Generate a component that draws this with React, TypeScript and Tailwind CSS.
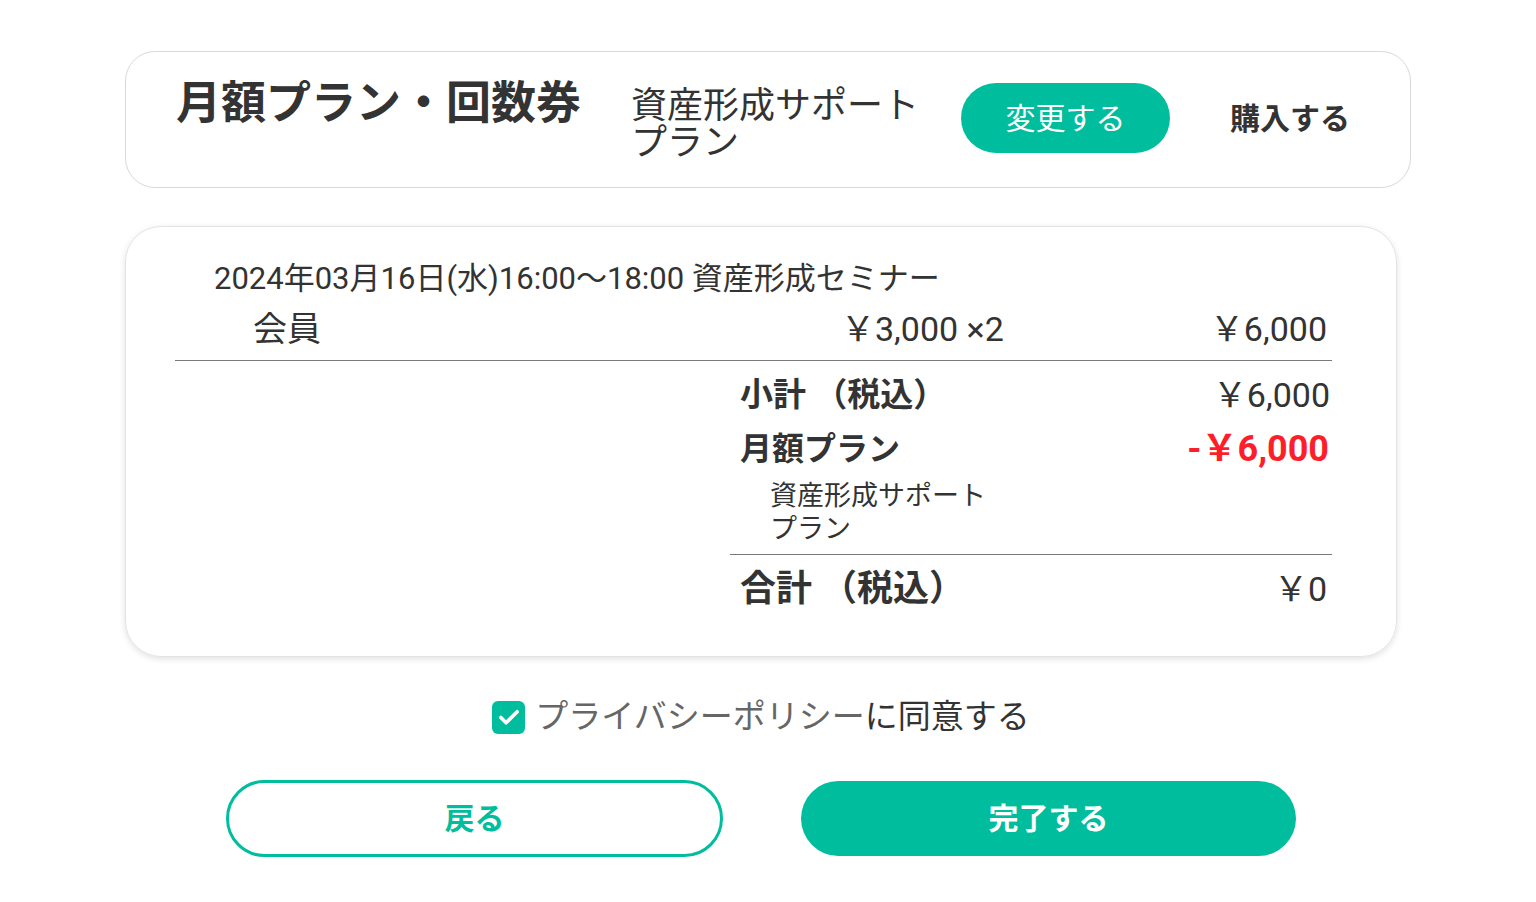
const font = { fontFamily: 'Roboto, "Noto Sans CJK JP", sans-serif' };

function Check() {
  return (
    <svg width="26" height="26" viewBox="0 0 24 24" fill="none" stroke="white" strokeWidth="3.4" strokeLinecap="round" strokeLinejoin="round">
      <path d="M4.5 12.5l4.8 4.8L19.5 7.2" />
    </svg>
  );
}

export default function App() {
  return (
    <div className="min-h-[902px] w-full bg-white text-[#333]" style={font}>
      <div className="pl-[125px] pt-[51px]">
        {/* plan card */}
        <div className="flex h-[137px] w-[1286px] items-start rounded-[30px] border border-[#d9d9d9] pl-[50px]">
          <h1 className="mt-[26px] text-[45px] font-bold leading-[52px] whitespace-nowrap">月額プラン・回数券</h1>
          <div className="ml-[50px] mt-[36px] w-[300px] text-[36px] leading-[37px]">資産形成サポートプラン</div>
          <button className="ml-[30px] mt-[31px] flex h-[70px] w-[209px] items-center justify-center rounded-full bg-[#00bd9d] text-[30px] text-white">
            変更する
          </button>
          <button className="ml-[60px] mt-[31px] flex h-[70px] items-center text-[30px] font-bold">購入する</button>
        </div>

        {/* order card */}
        <div className="mt-[38px] w-[1272px] rounded-[36px] border border-[#e3e3e3] pb-[33px] pl-[49px] pt-[32px] shadow-[0_2px_6px_rgba(0,0,0,0.12)]">
          <div className="w-[1157px]">
            <div className="h-[40px] pl-[39px] text-[31px] leading-[40px] whitespace-nowrap">
              2024年03月16日(水)16:00〜18:00 資産形成セミナー
            </div>
            <div className="flex h-[62px] items-center border-b border-[#7a7a7a] text-[34px]">
              <span className="w-[666px] pl-[78px]">会員</span>
              <span className="flex-1">￥3,000 ×2</span>
              <span className="pr-[5px]">￥6,000</span>
            </div>
            <div className="ml-[555px]">
              <div className="border-b border-[#7a7a7a] pb-[8px]">
                <div className="flex h-[68px] items-center justify-between pl-[10px] pr-[2px]">
                  <span className="text-[33px] font-bold whitespace-pre">小計 （税込）</span>
                  <span className="text-[34px]">￥6,000</span>
                </div>
                <div className="flex h-[40px] items-center justify-between pl-[10px] pr-[3px]">
                  <span className="text-[32px] font-bold">月額プラン</span>
                  <span className="text-[36px] font-bold text-[#fe1e2a]">-￥6,000</span>
                </div>
                <div className="mt-[11px] w-[270px] pl-[40px] text-[27px] leading-[33px]">資産形成サポートプラン</div>
              </div>
              <div className="flex h-[68px] items-center justify-between pl-[10px] pr-[5px]">
                <span className="text-[36px] font-bold whitespace-pre">合計 （税込）</span>
                <span className="text-[34px]">￥0</span>
              </div>
            </div>
          </div>
        </div>

        {/* agreement */}
        <div className="mt-[40px] flex w-[1272px] items-center justify-center">
          <span className="flex h-[33px] w-[33px] items-center justify-center rounded-[6px] bg-[#00bd9d]">
            <Check />
          </span>
          <span className="ml-[10px] text-[33px] leading-[40px]">
            <span className="text-[#666]">プライバシーポリシー</span>に同意する
          </span>
        </div>

        {/* actions */}
        <div className="mt-[43px] flex w-[1272px] items-center justify-center gap-[78px]">
          <button className="flex h-[77px] w-[497px] items-center justify-center rounded-full border-[3px] border-[#00bd9d] text-[30px] font-bold text-[#00bd9d]">
            戻る
          </button>
          <button className="flex h-[75px] w-[495px] items-center justify-center rounded-full bg-[#00bd9d] text-[30px] font-bold text-white">
            完了する
          </button>
        </div>
      </div>
    </div>
  );
}
